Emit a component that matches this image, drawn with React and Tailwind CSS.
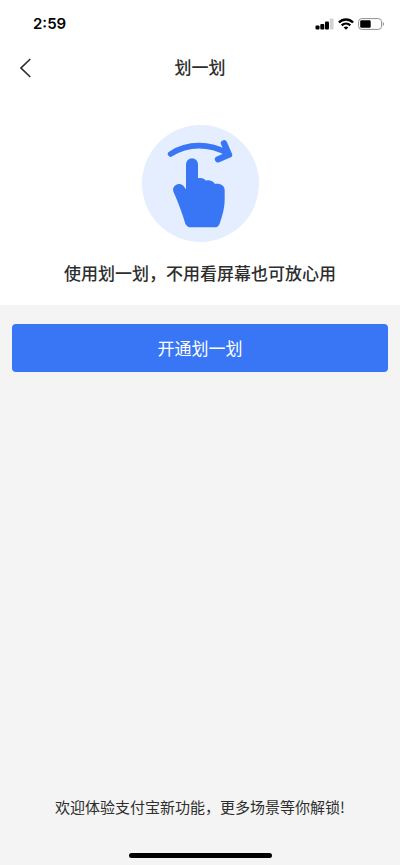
function SignalIcon() {
  return (
    <svg className="h-3 w-[19px]" viewBox="0 0 19 12" aria-hidden="true">
      <rect x="0.5" y="7.5" width="4" height="4" rx="1" />
      <rect x="5.3" y="6" width="4" height="5.500" rx="1" />
      <rect x="10" y="3.500" width="4" height="8" rx="1" />
      <rect x="14.800" y="0.500" width="3.700" height="11" rx="1" fill="#d2d2d2" />
    </svg>
  );
}

function WifiIcon() {
  return (
    <svg className="h-3 w-4" viewBox="0 0 16 12" fill="none" stroke="#000" strokeWidth="2.300" aria-hidden="true">
      <path d="M0.900 4.500C4.900 0.500 11.100 0.500 15.100 4.500" />
      <path d="M3.700 7.400C6.200 5 9.800 5 12.300 7.400" />
      <path d="M8 11.700L5.700 9.400C7 8.200 9 8.200 10.300 9.400Z" fill="#000" stroke="none" />
    </svg>
  );
}

function BatteryIcon() {
  return (
    <svg className="h-3 w-[27px]" viewBox="0 0 27 12" aria-hidden="true">
      <rect x="0.600" y="0.600" width="23" height="10.800" rx="3" fill="#fff" stroke="#8f8f8f" />
      <rect x="2.200" y="2.200" width="10.500" height="7.600" rx="1.300" />
      <path d="M24.800 4C26.400 4.500 26.400 7.500 24.800 8Z" fill="#8f8f8f" />
    </svg>
  );
}

function SwipeIllustration() {
  return (
    <svg className="h-[117px] w-[117px]" viewBox="36 29 351 351" aria-hidden="true">
      <circle cx="211.500" cy="204.500" r="175.500" fill="#e4eefe" />
      <path
        d="M168 147a18 18 0 0 1 36 0V189C213 186 223 189 228 196C238 193 249 197 255 206C270 203 284 210 284 225V252C284 281 276 304 269 325Q265 336 253 336H184Q171 336 166 325C158 299 146 264 131 231C123 211 146 198 160 211L168 222Z"
        fill="#3876f6"
      />
      <g fill="none" stroke="#3876f6" strokeLinecap="round" strokeLinejoin="round">
        <path d="M122 116C174 82 239 84 293 114" strokeWidth="17" />
        <path d="M282 84L297 118L264 132" strokeWidth="19" />
      </g>
    </svg>
  );
}

export default function App() {
  return (
    <div className="flex min-h-screen flex-col bg-[#f4f4f4] font-['Noto_Sans_CJK_SC',sans-serif] text-[#2e2e2e]">
      <div className="bg-white">
        <div className="flex h-12 items-center justify-between pr-[15px] pl-[33px] text-black">
          <time className="font-['Inter',sans-serif] text-[15px] leading-6 font-semibold">2:59</time>
          <div className="flex items-center gap-1">
            <SignalIcon />
            <WifiIcon />
            <BatteryIcon />
          </div>
        </div>
        <header className="grid h-10 grid-cols-[40px_1fr_40px] items-center">
          <button type="button" aria-label="返回" className="flex h-10 items-center pl-5">
            <svg className="h-5 w-3" viewBox="0 0 12 20" fill="none" stroke="#2e2e2e" strokeWidth="1.600" aria-hidden="true">
              <path d="M10.300 1L1 10L10.300 19" />
            </svg>
          </button>
          <h1 className="pb-0.5 text-center text-[17px] leading-6 font-medium">划一划</h1>
        </header>
        <section className="flex flex-col items-center gap-[19px] pt-[37px] pb-5">
          <SwipeIllustration />
          <p className="text-center text-[17px] leading-6 font-medium">使用划一划，不用看屏幕也可放心用</p>
        </section>
      </div>
      <main className="px-3 pt-[19px]">
        <button type="button" className="h-12 w-full rounded bg-[#3876f6] text-[17px] leading-6 text-white">
          开通划一划
        </button>
      </main>
      <footer className="mt-auto flex flex-col items-center gap-[34px] pb-[7px]">
        <p className="text-center text-[15px] leading-6">欢迎体验支付宝新功能，更多场景等你解锁!</p>
        <div className="h-[5px] w-[143px] rounded-full bg-black" />
      </footer>
    </div>
  );
}
